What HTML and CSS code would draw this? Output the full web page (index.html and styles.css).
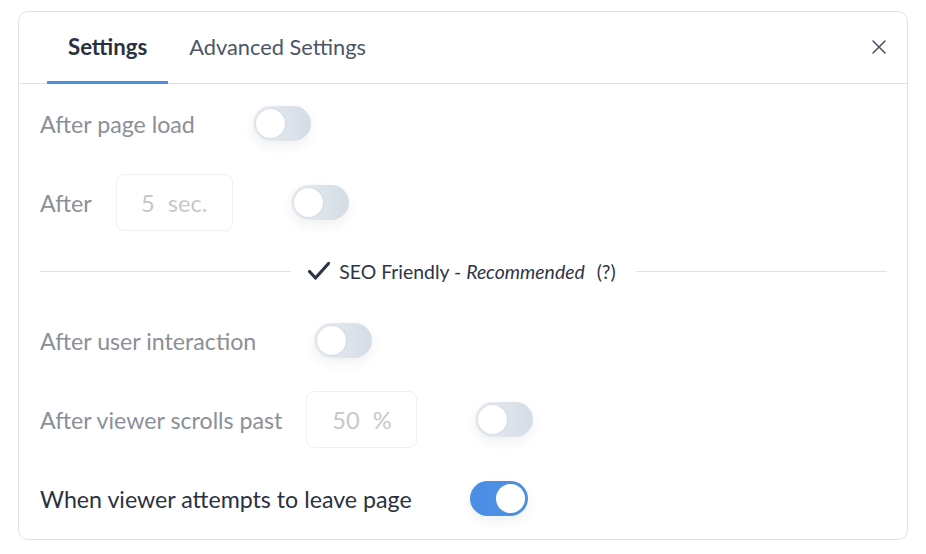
FILE: index.html
```html
<!DOCTYPE html>
<html lang="en">
<head>
<meta charset="utf-8">
<title>Settings</title>
<link rel="stylesheet" href="styles.css">
</head>
<body>
<div class="card">
  <div class="header">
    <div class="tabs">
      <div class="tab active">Settings</div>
      <div class="tab">Advanced Settings</div>
    </div>
    <button class="close" aria-label="Close">
      <svg width="16" height="16" viewBox="0 0 16 16"><path d="M2 2 L14 14 M14 2 L2 14" stroke="#4b5567" stroke-width="1.6" stroke-linecap="round" fill="none"/></svg>
    </button>
  </div>
  <div class="body">
    <div class="row disabled">
      <span class="label">After page load</span>
      <span class="toggle"><span class="knob"></span></span>
    </div>
    <div class="row disabled">
      <span class="label">After</span>
      <span class="field field-sec"><span>5</span><span>sec.</span></span>
      <span class="toggle"><span class="knob"></span></span>
    </div>
    <div class="divider">
      <span class="line"></span>
      <span class="seo">
        <svg class="check" width="24" height="20" viewBox="0 0 24 20"><path d="M2.5 10.5 L8.5 17 L21.5 2.5" stroke="#2d3546" stroke-width="3.2" stroke-linecap="round" stroke-linejoin="round" fill="none"/></svg>
        <span>SEO Friendly - <em>Recommended</em></span>
        <span class="help">(?)</span>
      </span>
      <span class="line"></span>
    </div>
    <div class="row disabled">
      <span class="label">After user interaction</span>
      <span class="toggle"><span class="knob"></span></span>
    </div>
    <div class="row disabled">
      <span class="label">After viewer scrolls past</span>
      <span class="field field-pct"><span>50</span><span>%</span></span>
      <span class="toggle"><span class="knob"></span></span>
    </div>
    <div class="row">
      <span class="label">When viewer attempts to leave page</span>
      <span class="toggle on"><span class="knob"></span></span>
    </div>
  </div>
</div>
</body>
</html>
```

FILE: styles.css
```css
* { box-sizing: border-box; }
html, body { margin: 0; padding: 0; background: #ffffff; }
body {
  font-family: Lato, "Noto Sans", "Liberation Sans", sans-serif;
  color: #2a3142;
}
.card {
  margin: 11px 0 0 18px;
  width: 890px;
  height: 529px;
  border: 1px solid #dde3ea;
  border-radius: 10px;
  background: #fff;
}
.header {
  display: flex;
  align-items: stretch;
  justify-content: space-between;
  height: 72px;
  border-bottom: 1px solid #dde3ea;
  padding: 0 20px 0 28px;
}
.tabs { display: flex; }
.tab {
  display: flex;
  align-items: center;
  padding: 0 21px;
  font-size: 21.8px;
  color: #4b5567;
  border-bottom: 3px solid transparent;
  margin-bottom: -1px;
}
.tab.active {
  font-weight: 700;
  font-size: 22.2px;
  color: #2a3142;
  border-bottom-color: #4a90e2;
}
.close {
  border: 0;
  background: none;
  padding: 0;
  display: flex;
  align-items: center;
  cursor: pointer;
  margin-top: -1px;
}
.body {
  padding: 11px 20px 0 21px;
  display: flex;
  flex-direction: column;
  gap: 22px;
}
.row {
  height: 57px;
  display: flex;
  align-items: center;
}
.label {
  font-size: 23.2px;
  color: #2a3142;
  margin-right: 58px;
}
.row.disabled .label { color: #8b8f98; }
.row.disabled .label.wide { margin-right: 62px; }
.row .field + .toggle { margin-left: 58px; }
.row .label:has(+ .field) { margin-right: 24px; }
.row.disabled .label.long { margin-right: 26px; }
.field {
  height: 57px;
  border: 1px solid #eef0f3;
  border-radius: 8px;
  display: flex;
  align-items: center;
  justify-content: center;
  gap: 13px;
  font-size: 23.6px;
  color: #c5c8cd;
}
.field-sec { width: 117px; }
.field-pct { width: 111px; }
.toggle {
  position: relative;
  width: 58px;
  height: 35px;
  border-radius: 18px;
  background: linear-gradient(90deg, #e9edf2 0%, #d4dce4 100%);
  box-shadow: 0 5px 12px rgba(40, 50, 70, 0.07);
  flex: none;
}
.knob {
  position: absolute;
  top: 3px;
  left: 3px;
  width: 29px;
  height: 29px;
  border-radius: 50%;
  background: #fff;
  box-shadow: 0 0 0 1px rgba(200, 210, 220, 0.5);
}
.toggle.on {
  background: linear-gradient(90deg, #4a8fe6 0%, #4f8fe0 100%);
}
.toggle.on .knob {
  left: auto;
  right: 3px;
  box-shadow: none;
}
.divider {
  height: 37px;
  display: flex;
  align-items: center;
}
.line {
  flex: 1;
  height: 1px;
  background: #dde3ea;
}
.seo {
  display: flex;
  align-items: center;
  padding: 0 20px 0 16px;
  font-size: 19.4px;
  color: #2d3546;
}
.check { margin-right: 8px; margin-top: -2px; }
.seo em { font-style: italic; }
.help { margin-left: 12px; }
```
